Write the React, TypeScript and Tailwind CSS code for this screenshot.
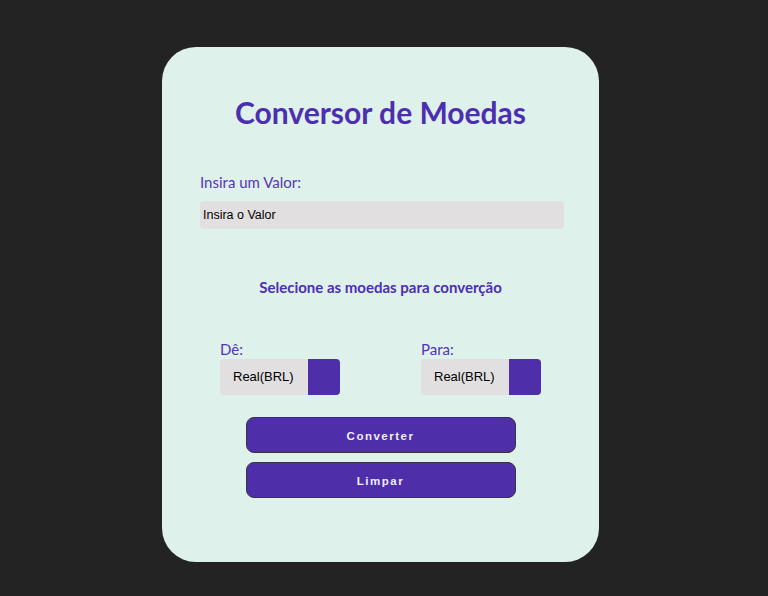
import React from "react";

// currency select: gray box + purple arrow block
const CurrencySelect = ({ label }: { label: string }) => (
  <div className="flex flex-col">
    <span className="h-[19px] text-[15px] leading-[19px] text-[#5334b5]">{label}</span>
    <div className="flex h-[36px] w-[120px] overflow-hidden rounded-[4px] bg-[#e2dfe0]">
      <div className="flex flex-1 items-center pl-[13px] font-['Liberation_Sans',Arial,sans-serif] text-[13px] text-black">
        Real(BRL)
      </div>
      <div className="w-[32px] bg-[#4e2fa9]" />
    </div>
  </div>
);

const ActionButton = ({ text }: { text: string }) => (
  <button className="flex h-[36px] w-[270px] items-center justify-center rounded-[8px] border border-[#3a3440] bg-[#4e2fa9] pt-[3px] font-['Liberation_Sans',Arial,sans-serif] text-[11.5px] font-bold tracking-[1.5px] text-[#f1ecff]">
    {text}
  </button>
);

export default function App() {
  return (
    <div className="min-h-[596px] w-full bg-[#232323] pt-[47px] font-['Lato','Noto_Sans',sans-serif]">
      <div className="ml-[162px] flex h-[515px] w-[437px] flex-col rounded-[34px] bg-[#dff1eb]">
        <h1 className="mt-[47px] text-center text-[30px] font-bold leading-[36px] text-[#4c2fb0]">
          Conversor de Moedas
        </h1>

        <div className="mt-[42px] flex flex-col pl-[38px] pr-[35px]">
          <label className="h-[20px] text-[15px] leading-[20px] text-[#5536b8]">Insira um Valor:</label>
          <div className="mt-[9px] flex h-[28px] items-center rounded-[4px] bg-[#e2dfe0] pl-[3px] font-['Liberation_Sans',Arial,sans-serif] text-[12.5px] text-black">
            Insira o Valor
          </div>
        </div>

        <p className="mt-[48px] text-center text-[15px] font-bold leading-[20px] text-[#4c2fb0]">
          Selecione as moedas para converção
        </p>

        <div className="mt-[43px] flex gap-[81px] pl-[58px]">
          <CurrencySelect label="Dê:" />
          <CurrencySelect label="Para:" />
        </div>

        <div className="mt-[22px] flex flex-col items-center gap-[9px]">
          <ActionButton text="Converter" />
          <ActionButton text="Limpar" />
        </div>
      </div>
    </div>
  );
}
